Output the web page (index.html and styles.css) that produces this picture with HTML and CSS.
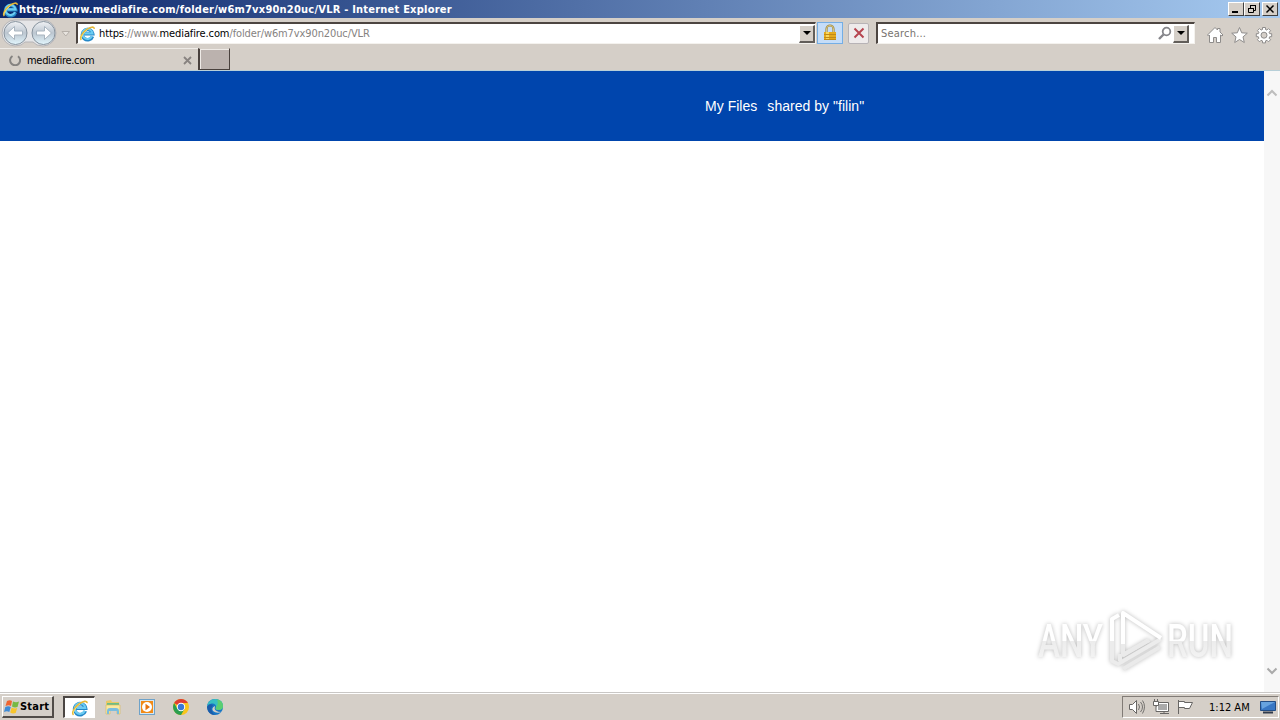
FILE: index.html
```html
<!DOCTYPE html>
<html lang="en">
<head>
    <meta charset="UTF-8">
    <title>https://www.mediafire.com/folder/w6m7vx90n20uc/VLR - Internet Explorer</title>
    <link rel="stylesheet" href="styles.css">
</head>
<body>
    <!-- Shared icons -->
    <svg class="defs" width="0" height="0">
        <symbol id="ie" viewBox="0 0 18 18">
            <path d="M14.300 12A5.500 5.500 0 1 1 14.500 9.200H5.500" fill="none" stroke="#2587c7" stroke-width="3.600"/>
            <path d="M13.800 11.800A5.300 5.300 0 1 1 14.300 8.900H5.500" fill="none" stroke="#6cccf2" stroke-width="2.200"/>
            <path d="M2.500 15.800C.3 14 3.500 8.300 8 5c4-3 8.200-3.800 8-.9" fill="none" stroke="#e5b737" stroke-width="1.700"/>
            <path d="M2.500 15C1.500 13 5 8 9 5" fill="none" stroke="#ffe87c" stroke-width=".8"/>
        </symbol>
    </svg>

    <div class="title-bar">
        <svg class="title-icon" width="17" height="17"><use href="#ie"/></svg>
        <span class="title-text">https://www.mediafire.com/folder/w6m7vx90n20uc/VLR - Internet Explorer</span>
        <div class="window-buttons">
            <div class="win-btn"><svg width="12" height="10"><path d="M2 8h6" stroke="#000" stroke-width="2"/></svg></div>
            <div class="win-btn restore"><svg width="12" height="10"><path d="M4.500 4V1.500h5v5H8M4 1.500h6M2.500 4.500h5v4h-5zM2 4.500h6" fill="none" stroke="#000"/></svg></div>
            <div class="win-btn"><svg width="12" height="10"><path d="M2.500 1.500l7 7m0-7l-7 7" stroke="#000" stroke-width="1.500"/></svg></div>
        </div>
    </div>

    <div class="nav-bar">
        <svg class="nav-arrows" width="72" height="30">
            <defs>
                <linearGradient id="navFill" x1="0" y1="0" x2="0" y2="1">
                    <stop offset="0" stop-color="#f0f2f5"/>
                    <stop offset=".5" stop-color="#bcc6d0"/>
                    <stop offset="1" stop-color="#e2f6fd"/>
                </linearGradient>
            </defs>
            <path d="M15 2h28a13 13 0 0 1 0 26q-7 0-10-4h-8q-3 4-10 4a13 13 0 0 1 0-26z" fill="#e5e5e7" stroke="#b5b4b6"/>
            <circle cx="15.500" cy="15" r="11.500" fill="url(#navFill)" stroke="#87939e"/>
            <circle cx="43.500" cy="15" r="11.500" fill="url(#navFill)" stroke="#87939e"/>
            <path d="M7.500 15l7-6.500v4.500h8v4h-8v4.500zM51.500 15l-7-6.500v4.500h-8v4h8v4.500z" fill="#fff" stroke="#a9b5c0"/>
            <path d="M62 13.500h7.500L65.800 18z" fill="#e8e4df" stroke="#b5afa9"/>
        </svg>
        <div class="address">
            <svg class="address-icon" width="17" height="17"><use href="#ie"/></svg>
            <span class="url"><b>https</b>://www.<b>mediafire.com</b>/folder/w6m7vx90n20uc/VLR</span>
            <div class="drop"></div>
        </div>
        <div class="lock">
            <svg width="16" height="18">
                <path d="M4.500 9V5a3.500 3.500 0 0 1 7 0v4" fill="none" stroke="#9b8544" stroke-width="2.200"/>
                <path d="M4.500 8V5a3.500 3.500 0 0 1 7 0v3" fill="none" stroke="#e6d78d" stroke-width=".8"/>
                <path d="M2 8h12v8H2z" fill="#e5aa1c"/>
                <path d="M4 8h3v8H4z" fill="#f9d75d"/>
                <path d="M2 10.500h12M2 13.500h12M2 15.500h12" stroke="#c18a17"/>
            </svg>
        </div>
        <div class="stop">
            <svg width="12" height="12"><path d="M1.500 1.500l9 9m0-9l-9 9" stroke="#b64550" stroke-width="2"/></svg>
        </div>
        <div class="search">
            <span>Search...</span>
            <svg width="14" height="15"><circle cx="8.500" cy="5.500" r="3.800" fill="#fff" stroke="#85858a" stroke-width="1.800"/><path d="M5.500 8.500l-4.500 4.500" stroke="#85858a" stroke-width="2.400"/></svg>
            <div class="drop"></div>
        </div>
        <svg class="tools" width="68" height="20">
            <g fill="#fff" stroke="#8e8c8b">
                <path d="M1.500 10L9 2.500l2.500 2.500V3.500h2.500V7l3 3-1 1-1.500-1v7.500h-4v-5h-3v5h-4V10L2.500 11z"/>
                <path d="M33.500 2.500l2.200 5.300 5.600.4-4.300 3.700 1.300 5.600-4.800-3-4.800 3 1.300-5.600-4.300-3.700 5.600-.4z"/>
                <path d="M56.500 2.500h3v2l1.500.6 1.500-1.500 2.100 2.100L63.100 7.200l.6 1.500h2v3h-2l-.6 1.500 1.500 1.500-2.100 2.100-1.500-1.500-1.500.6v2h-3v-2l-1.500-.6-1.500 1.500-2.100-2.100 1.500-1.500-.6-1.500h-2v-3h2l.6-1.500-1.500-1.500 2.100-2.100L55 5.100l1.500-.6z"/>
                <circle cx="58" cy="10.200" r="3" fill="#d5cfc8"/>
            </g>
        </svg>
    </div>

    <div class="tab-bar">
        <div class="tab">
            <svg class="spinner" width="12" height="12"><path d="M3.500 2A5 5 0 1 0 9 2.200" fill="none" stroke="#858381" stroke-width="2"/></svg>
            <span>mediafire.com</span>
            <svg class="tab-close" width="9" height="9"><path d="M1 1l7 7m0-7L1 8" stroke="#888380" stroke-width="1.800"/></svg>
        </div>
        <div class="new-tab"></div>
    </div>

    <div class="viewport">
        <div class="page">
            <div class="header"><span>My Files</span><span>shared by "filin"</span></div>
        </div>
        <div class="scrollbar">
            <svg width="12" height="8"><path d="M1.500 6.500L6 2l4.500 4.500" fill="none" stroke="#bdbdbd" stroke-width="2"/></svg>
            <svg width="12" height="8"><path d="M1.500 1.500L6 6l4.500-4.500" fill="none" stroke="#aaa" stroke-width="2"/></svg>
        </div>
        <svg class="watermark" width="230" height="80">
            <defs>
                <linearGradient id="fade" gradientUnits="userSpaceOnUse" x1="0" y1="21" x2="0" y2="56">
                    <stop offset=".5" stop-color="#fff"/>
                    <stop offset=".51" stop-color="#ececec"/>
                    <stop offset="1" stop-color="#f3f3f3"/>
                </linearGradient>
            </defs>
            <g class="mark">
                <text x="8" y="55" textLength="65" lengthAdjust="spacingAndGlyphs" fill="url(#fade)">ANY</text>
                <text x="137" y="55" textLength="66" lengthAdjust="spacingAndGlyphs" fill="url(#fade)">RUN</text>
                <g fill="none" stroke-width="4" stroke-linejoin="round">
                    <path d="M82 39V17l7-4" stroke="#fff"/>
                    <path d="M82 39v20l6 3 43-25M90 52v7M93 53l26-15" stroke="#ececec"/>
                    <path d="M131 36L93 11v31" stroke="#fff"/>
                    <path d="M93 42v11l26-15M93 67l37-22" stroke="#eaeaea"/>
                </g>
            </g>
        </svg>
    </div>

    <div class="taskbar">
        <div class="start">
            <svg width="16" height="16">
                <path d="M3 2q3-1.500 5 0L7 7Q5 5.500 1.500 7z" fill="#ef6530"/>
                <path d="M9 2.500q3 1.500 6 0L13.500 8q-3 1-5.500-.5z" fill="#77b944"/>
                <path d="M1.300 8q3-1.500 5.500 0l-1.500 5Q3 11.500 0 13z" fill="#3f8bd6"/>
                <path d="M7.700 8.500q3 1.500 5.500.500l-1.500 5q-3 1-5.500-.5z" fill="#f8c52c"/>
            </svg>
            <span>Start</span>
        </div>
        <div class="task active"><svg width="18" height="18"><use href="#ie"/></svg></div>
        <div class="task">
            <svg width="18" height="18">
                <path d="M2 3l5-1 1 2h7v9H2z" fill="#e9c966"/>
                <path d="M3 5h12v3H3z" fill="#6bbd86"/>
                <path d="M2 7h14v9h-3v-4H6v4H2z" fill="#fae9a0" stroke="#d9b958" stroke-width=".6"/>
                <path d="M3 16v-3q0-3 3-3h6q3 0 3 3v3h-2v-3H5v3z" fill="#79bddf"/>
            </svg>
        </div>
        <div class="task">
            <svg width="18" height="18">
                <rect x="1.500" y="1.500" width="15" height="15" fill="#d6e7f3" stroke="#6ea2c9"/>
                <rect x="3" y="3" width="12" height="12" fill="#f18a18"/>
                <circle cx="9" cy="9" r="5" fill="#fff"/>
                <path d="M7.500 5.800v6.400L12 9z" fill="#e67310"/>
            </svg>
        </div>
        <div class="task">
            <svg width="18" height="18">
                <circle cx="9" cy="9" r="8" fill="#f9c51c"/>
                <path d="M9 9L2.100 5A8 8 0 0 1 15.900 5H9z" fill="#df3d32"/>
                <path d="M2.100 5A8 8 0 0 0 9 17l3.500-6H5.500z" fill="#2b9e50"/>
                <circle cx="9" cy="9" r="4.200" fill="#fff"/>
                <circle cx="9" cy="9" r="3.200" fill="#3978d7"/>
            </svg>
        </div>
        <div class="task">
            <svg width="18" height="18">
                <circle cx="9" cy="9" r="8" fill="#1676c5"/>
                <path d="M1 8.500Q2 1 9.500 1 17 1.500 17 8q0 4-4.500 4-4 0-2.500-3Q10 5 5.500 5.500 2 6 1 8.500z" fill="#38bfc1"/>
                <path d="M11 1.300Q17 3 17 8q0 4-4.500 4-4 0-2.500-3Q13 6 11 1.300z" fill="#5bce72"/>
                <path d="M9 8q-2 6 7 6-6 2-9-1-2-3 2-5z" fill="#d5cfc8"/>
                <path d="M1 9q2-4 6-2-4 5 2 10-7 0-8-8z" fill="#1c5ca9"/>
            </svg>
        </div>
        <div class="tray">
            <svg class="tray-icons" width="66" height="18">
                <g fill="#fff" stroke="#686664">
                    <path d="M.5 6.500h3l4-4v13l-4-4h-3z"/>
                    <path d="M9.500 6q2 3 0 6M11.500 4q4 5 0 10M13.500 2.500q4 6 0 13" fill="none" stroke-width=".9"/>
                    <path d="M27.500 4.500h12v9h-12zM31 15.500h9M35 13.500v2"/>
                    <path d="M29 6h9v6h-9z" fill="#aaa" stroke="none"/>
                    <path d="M24.500 3.500h5v4h-5zM25.500 1v2m3-2v2M27 7.500v6h3"/>
                    <path d="M49.500 2v14M49.500 3.500h6v1h8l-3 6h-5v-1h-6z"/>
                </g>
            </svg>
            <span class="clock">1:12 AM</span>
            <svg class="desktop" width="16" height="14"><path d="M.5 1.500h15v9H.5z" fill="#3877c4" stroke="#234d84"/><path d="M1 2h14L2 9z" fill="#67a3df"/><path d="M3 12.500h10" stroke="#303b4c" stroke-width="2"/></svg>
        </div>
    </div>
</body>
</html>
```
FILE: styles.css
```css
* {
    box-sizing: border-box;
}
body {
    margin: 0;
    width: 1280px;
    height: 720px;
    overflow: hidden;
    display: flex;
    flex-direction: column;
    background: #d5cfc8;
    font-family: "DejaVu Sans Condensed", "DejaVu Sans", sans-serif;
    font-size: 11px;
    color: #000;
}
svg {
    display: block;
    flex: none;
}
.defs {
    position: absolute;
}
span {
    white-space: nowrap;
}
.title-bar {
    height: 18px;
    flex: none;
    display: flex;
    align-items: center;
    padding: 0 2px;
    background: linear-gradient(90deg, #0b266b, #a6caf0);
}
.title-text {
    color: #fff;
    font-weight: bold;
    letter-spacing: 0.22px;
}
.window-buttons {
    display: flex;
    margin-left: auto;
}
.win-btn {
    width: 16px;
    height: 14px;
    padding: 1px;
    background: #d5cfc8;
    border: 1px solid;
    border-color: #fff #404040 #404040 #fff;
}
.restore {
    margin-right: 2px;
}
.nav-bar {
    height: 30px;
    flex: none;
    display: flex;
    align-items: center;
}
.address {
    width: 740px;
    height: 22px;
    margin-left: 4px;
    display: flex;
    align-items: center;
    background: #fff;
    border: 1px solid;
    border-width: 2px 1px 1px 2px;
    border-color: #4c4541 #f4f2ee #f4f2ee #4c4541;
}
.address-icon {
    margin: 0 3px 0 1px;
}
.url {
    color: #85827f;
    letter-spacing: -0.11px;
}
.url b {
    color: #000;
    font-weight: normal;
}
.drop {
    width: 16px;
    height: 18px;
    display: flex;
    align-items: center;
    justify-content: center;
    margin-left: auto;
    background: #d5cfc8;
    border: 1px solid;
    border-width: 1px 2px 2px 1px;
    border-color: #fff #625e5a #625e5a #fff;
}
.drop::after {
    content: "";
    border: 4px solid transparent;
    border-top-color: #000;
    border-bottom: 0;
}
.lock {
    width: 26px;
    height: 22px;
    margin-left: 1px;
    display: flex;
    align-items: center;
    justify-content: center;
    background: #c5ddf8;
    border: 1px solid #74aee5;
}
.stop {
    width: 21px;
    height: 21px;
    margin-left: 5px;
    display: flex;
    align-items: center;
    justify-content: center;
    background: #eeebeb;
    border: 1px solid #b7b3b6;
    border-radius: 2px;
}
.search {
    width: 319px;
    height: 22px;
    margin-left: 7px;
    padding: 0 5px 0 3px;
    display: flex;
    align-items: center;
    background: #fff;
    border: 1px solid;
    border-width: 2px 1px 1px 2px;
    border-color: #4c4541 #f4f2ee #f4f2ee #4c4541;
    color: #77736f;
}
.search span {
    letter-spacing: 0.2px;
}
.search svg {
    margin-left: auto;
}
.search .drop {
    margin-left: 1px;
}
.tools {
    margin-left: 11px;
    margin-top: 3px;
}
.tab-bar {
    height: 23px;
    flex: none;
    display: flex;
    border-bottom: 1px solid #b7cfd8;
}
.tab {
    width: 198px;
    display: flex;
    align-items: center;
    padding: 1px 6px 0 9px;
    border-top: 1px solid #efece8;
}
.tab span {
    margin-left: 6px;
    letter-spacing: -0.3px;
}
.tab-close {
    margin-left: auto;
}
.new-tab {
    width: 32px;
    height: 22px;
    background: #bbb2ae;
    border: 1px solid #49413d;
    border-width: 1px 1px 1px 2px;
    border-top-color: #d5cfc8;
    box-shadow: inset 1px 1px #efebe7;
}
.viewport {
    position: relative;
    flex: 1;
    display: flex;
    background: #fff;
}
.page {
    flex: 1;
}
.header {
    height: 70px;
    padding-left: 705px;
    display: flex;
    align-items: center;
    gap: 10px;
    background: #0045ad;
    color: #fff;
    font: 14px "Liberation Sans", Arial, sans-serif;
    letter-spacing: 0.03px;
}
.scrollbar {
    width: 16px;
    padding: 18px 2px 17px;
    display: flex;
    flex-direction: column;
    justify-content: space-between;
    background: #f7f7f7;
}
.watermark {
    position: absolute;
    left: 1030px;
    top: 531px;
}
.mark {
    font: 500 46px Roboto, sans-serif;
    filter: drop-shadow(0 0 2px #bbb);
}
.taskbar {
    height: 28px;
    flex: none;
    display: flex;
    align-items: center;
    padding: 1px 1px 0 2px;
    border-top: 1px solid #c9c7c5;
    box-shadow: inset 0 1px #fff;
}
.start {
    width: 52px;
    height: 22px;
    display: flex;
    align-items: center;
    padding-left: 1px;
    border: 1px solid;
    border-width: 1px 2px 2px 1px;
    border-color: #fff #514c48 #514c48 #fff;
    font-weight: bold;
}
.start span {
    letter-spacing: 0.2px;
}
.task {
    width: 32px;
    height: 22px;
    display: flex;
    align-items: center;
    justify-content: center;
    margin-right: 2px;
}
.active {
    margin-left: 9px;
    background: #fff;
    border: 1px solid;
    border-width: 2px 1px 1px 2px;
    border-color: #4b4643 #fff #fff #4b4643;
}
.tray {
    width: 157px;
    height: 22px;
    margin-left: auto;
    display: flex;
    align-items: center;
    padding: 0 2px 0 6px;
    border: 1px solid;
    border-color: #817b76 #fff #fff #817b76;
}
.clock {
    margin-left: 14px;
}
.desktop {
    margin-left: auto;
}
```
